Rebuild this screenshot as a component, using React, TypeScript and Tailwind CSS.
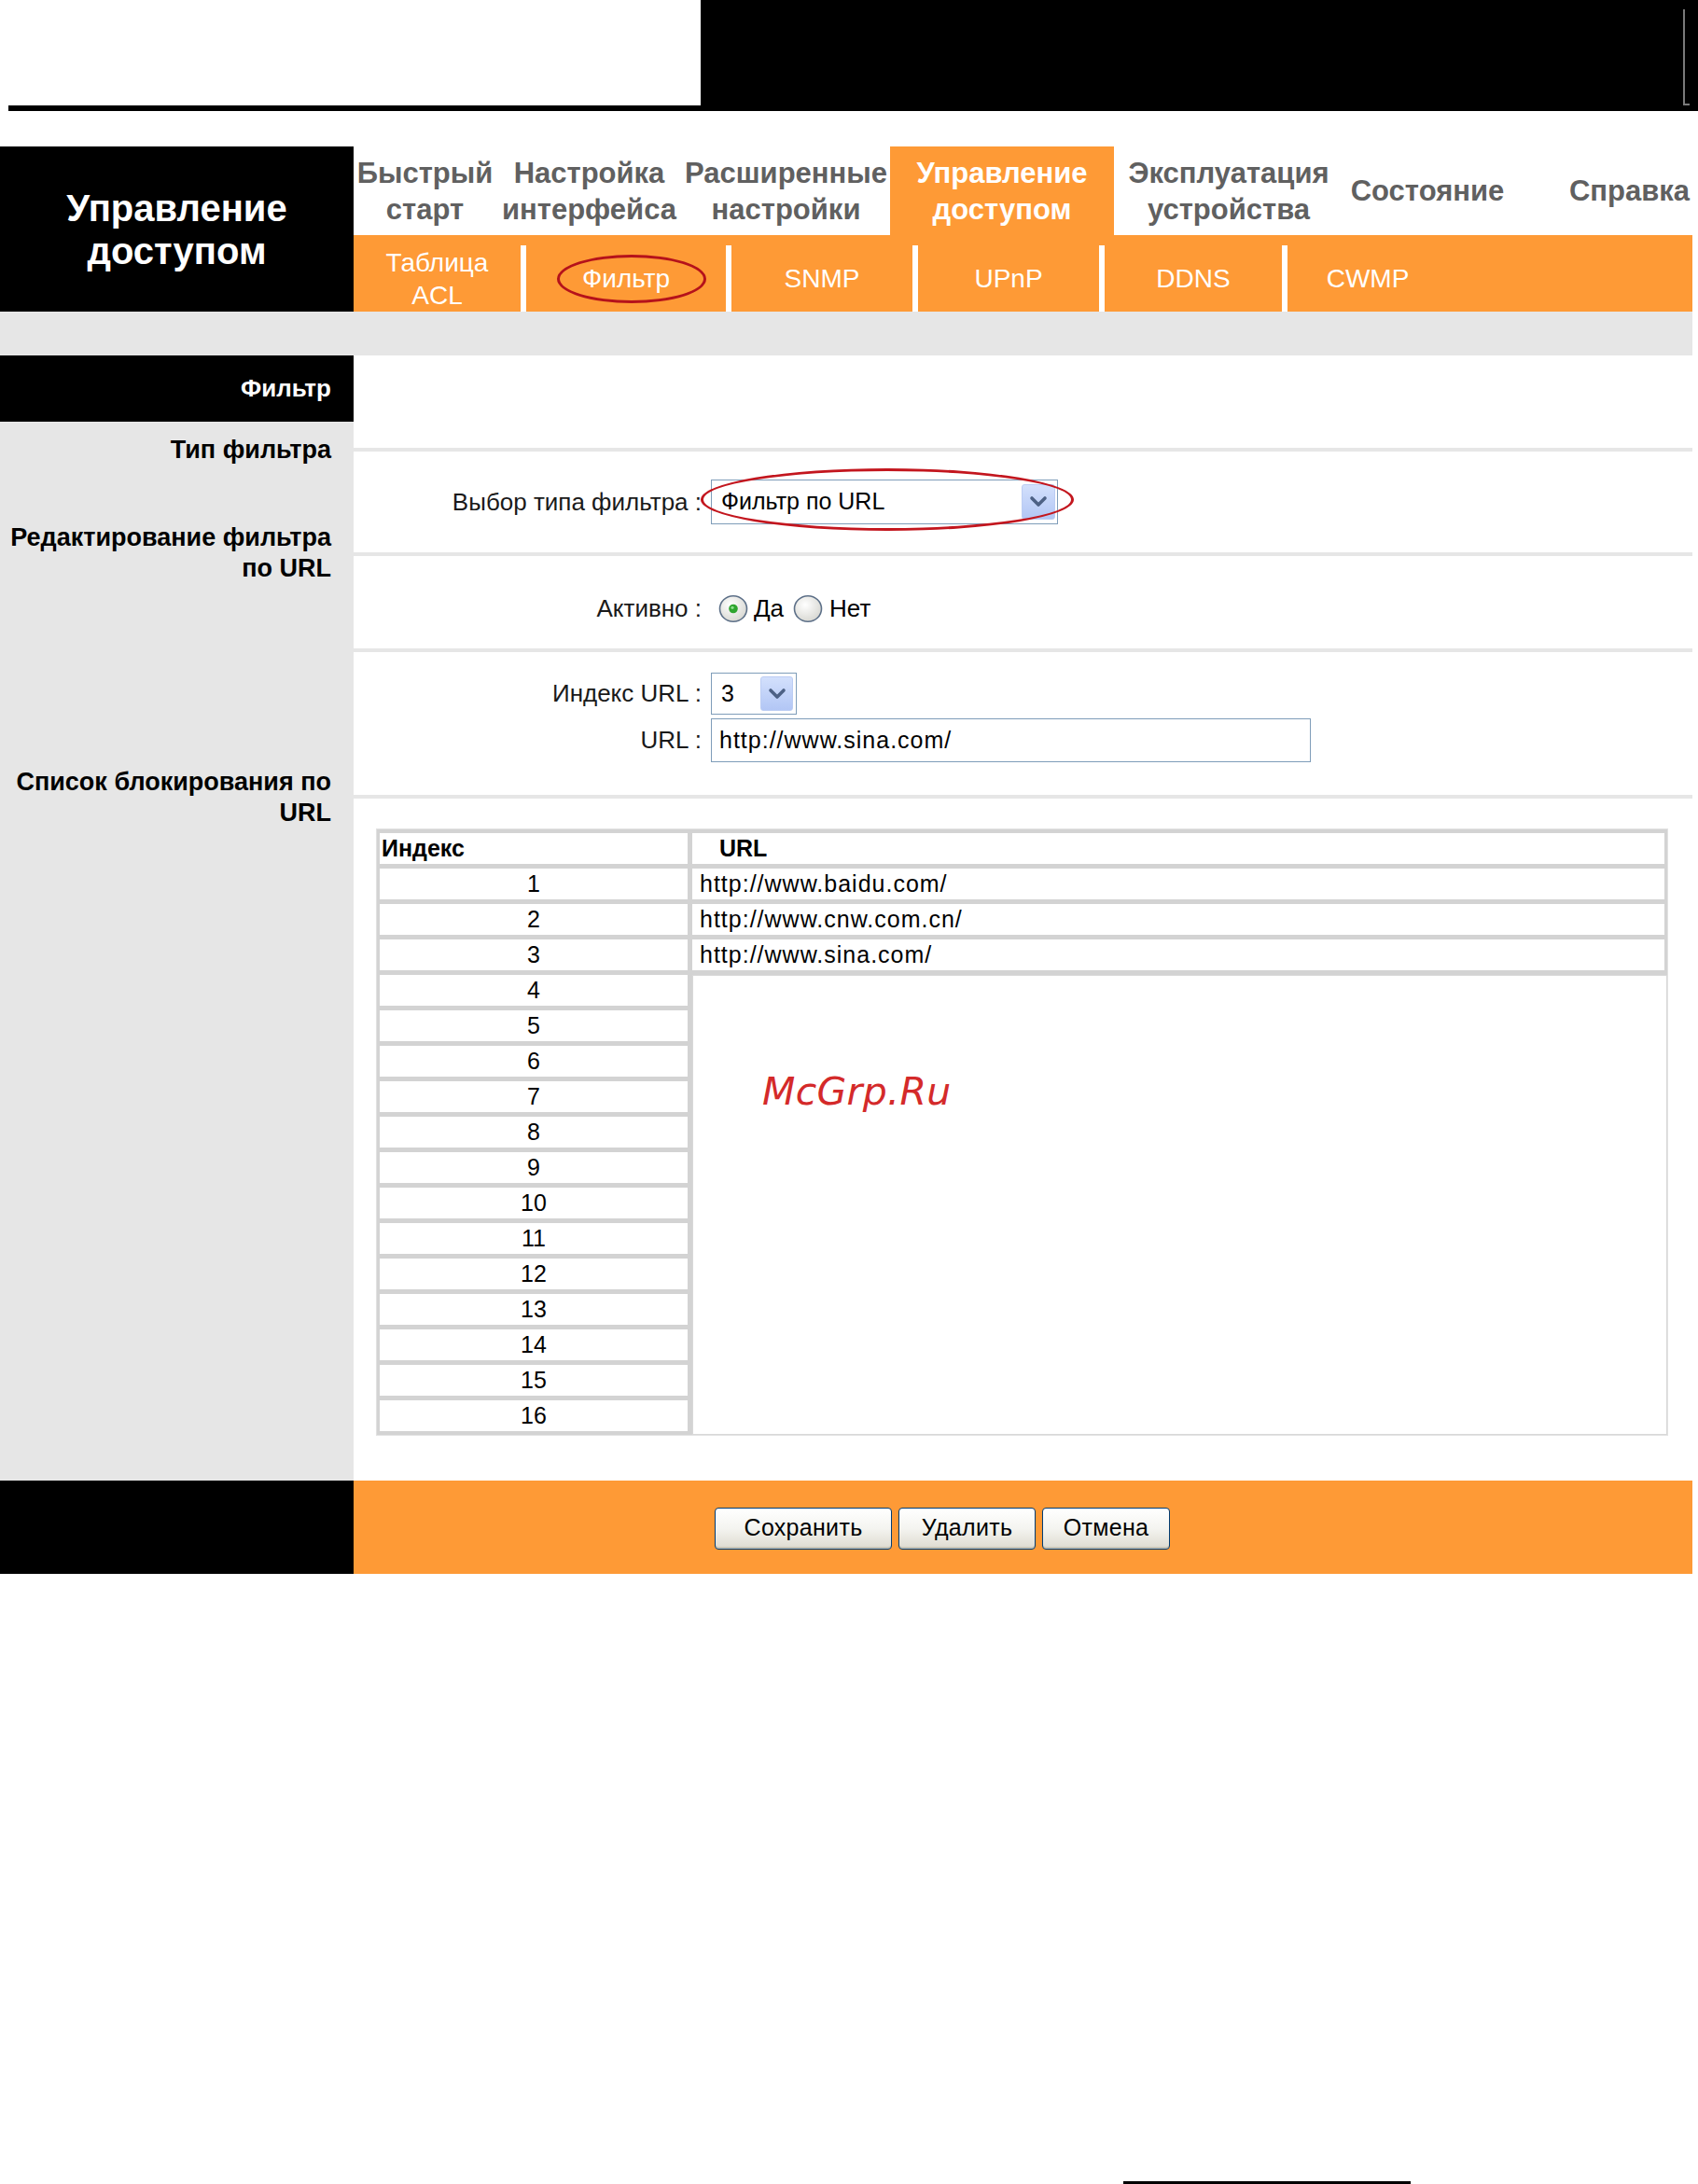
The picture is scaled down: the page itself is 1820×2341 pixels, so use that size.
import React from "react";

const navItems: { w: string; lines: string[]; active?: boolean; end?: boolean }[] = [
  { w: "w-[153px]", lines: ["Быстрый", "старт"] },
  { w: "w-[199px]", lines: ["Настройка", "интерфейса"] },
  { w: "w-[223px]", lines: ["Расширенные", "настройки"] },
  { w: "w-[240px]", lines: ["Управление", "доступом"], active: true },
  { w: "w-[246px]", lines: ["Эксплуатация", "устройства"] },
  { w: "w-[180px]", lines: ["Состояние"] },
  { w: "w-[194px]", lines: ["Справка"], end: true },
];

const subItems: { w: string; lines: string[]; circled?: boolean }[] = [
  { w: "w-[179px]", lines: ["Таблица", "ACL"] },
  { w: "w-[214px]", lines: ["Фильтр"], circled: true },
  { w: "w-[194px]", lines: ["SNMP"] },
  { w: "w-[194px]", lines: ["UPnP"] },
  { w: "w-[190px]", lines: ["DDNS"] },
  { w: "w-[172px]", lines: ["CWMP"] },
];

const urls = ["http://www.baidu.com/", "http://www.cnw.com.cn/", "http://www.sina.com/"];

function Chevron() {
  return (
    <svg width="20" height="14" viewBox="0 0 20 14">
      <path d="M3 3 L10 10 L17 3" fill="none" stroke="#4d6185" strokeWidth="3.6" strokeLinecap="round" strokeLinejoin="round" />
    </svg>
  );
}

function ArrowBox({ cls }: { cls: string }) {
  return (
    <div className={`absolute flex items-center justify-center rounded-[3px] border border-[#bccdf3] bg-gradient-to-b from-[#d3e0fc] to-[#b2c6f5] ${cls}`}>
      <Chevron />
    </div>
  );
}

function Radio({ checked }: { checked?: boolean }) {
  return (
    <svg width="32" height="31" viewBox="0 0 32 31">
      <defs>
        <radialGradient id={checked ? "rg1" : "rg2"} cx="0.4" cy="0.35" r="0.7">
          <stop offset="0" stopColor="#ffffff" />
          <stop offset="1" stopColor="#d6d6d0" />
        </radialGradient>
      </defs>
      <ellipse cx="16" cy="15.5" rx="14.5" ry="13.8" fill={`url(#${checked ? "rg1" : "rg2"})`} stroke="#5d7088" strokeWidth="1.6" />
      {checked && <circle cx="16" cy="15.5" r="4.8" fill="#2fa52f" />}
      {checked && <circle cx="15" cy="14.3" r="1.6" fill="#8fe08f" />}
    </svg>
  );
}

function XpButton({ w, label }: { w: string; label: string }) {
  return (
    <div className={`${w} flex h-[45px] items-center justify-center rounded-[4px] border border-[#003c74] bg-gradient-to-b from-[#ffffff] via-[#f4f4f0] to-[#dedbd0] text-[25px] tracking-[0.3px] text-black shadow-[inset_0_-2px_0_#c8c4b6]`}>
      {label}
    </div>
  );
}

export default function App() {
  return (
    <div className="relative h-[2341px] w-[1820px] overflow-hidden bg-white font-['Liberation_Sans',Arial,sans-serif]">
      {/* Top strip */}
      <div className="flex h-[119px]">
        <div className="flex w-[751px] flex-col justify-end">
          <div className="ml-[9px] h-[6px] bg-black" />
        </div>
        <div className="relative flex-1 bg-black">
          <div className="absolute left-[1053px] top-[10px] h-[102px] w-[2px] bg-[#7a7a7a]" />
          <div className="absolute left-[1053px] top-[111px] h-[2px] w-[7px] bg-[#7a7a7a]" />
        </div>
      </div>
      <div className="h-[38px]" />

      {/* Header */}
      <div className="flex h-[177px] w-[1814px]">
        <div className="flex w-[379px] flex-col items-center justify-center bg-black text-[40px] font-bold leading-[46px] text-white">
          <span>Управление</span>
          <span>доступом</span>
        </div>
        <div className="flex flex-1 flex-col">
          <div className="flex h-[95px] bg-white">
            {navItems.map((n) => (
              <div
                key={n.lines[0]}
                className={`${n.w} flex flex-col justify-center text-[31px] font-bold leading-[39px] ${
                  n.end ? "items-end pr-[3px]" : "items-center"
                } ${n.active ? "bg-[#fe9a36] text-white" : "text-[#606060]"}`}
              >
                {n.lines.map((l) => (
                  <span key={l} className="whitespace-nowrap">{l}</span>
                ))}
              </div>
            ))}
          </div>
          <div className="flex h-[82px] bg-[#fe9a36] pt-[11px]">
            {subItems.map((s, i) => (
              <React.Fragment key={s.lines[0]}>
                {i > 0 && <div className="h-full w-[6px] bg-white" />}
                <div className={`${s.w} relative flex flex-col items-center justify-center text-[28px] leading-[35px] text-white`}>
                  {s.lines.map((l) => (
                    <span key={l}>{l}</span>
                  ))}
                  {s.circled && (
                    <div className="absolute left-[33px] top-[10px] h-[52px] w-[160px] rounded-[50%] border-[3px] border-[#b5121b]" />
                  )}
                </div>
              </React.Fragment>
            ))}
          </div>
        </div>
      </div>

      {/* Gray band */}
      <div className="h-[47px] w-[1814px] bg-[#e6e6e6]" />

      {/* Main */}
      <div className="flex h-[1206px] w-[1814px]">
        {/* Left column */}
        <div className="flex w-[379px] flex-col bg-[#e6e6e6] text-right text-[27px] font-bold leading-[33px] text-black">
          <div className="flex h-[71px] items-center justify-end bg-black pr-[24px] text-[26px] text-white">Фильтр</div>
          <div className="mt-[14px] pr-[24px]">Тип фильтра</div>
          <div className="mt-[61px] pr-[24px]">
            Редактирование фильтра
            <br />
            по URL
          </div>
          <div className="mt-[196px] pr-[24px]">
            Список блокирования по
            <br />
            URL
          </div>
        </div>

        {/* Right column */}
        <div className="flex flex-1 flex-col bg-white text-[26px] text-[#1a1a1a]">
          <div className="h-[99px]" />
          <div className="h-[4px] bg-[#e6e6e6]" />
          {/* Row 1 */}
          <div className="relative flex h-[108px] items-center">
            <div className="w-[373px] text-right">Выбор типа фильтра :</div>
            <div className="relative ml-[10px] flex h-[48px] w-[372px] items-center border border-[#7f9db9] bg-white pl-[10px] text-[25px] text-black">
              Фильтр по URL
              <ArrowBox cls="right-[2px] top-[4px] h-[38px] w-[36px]" />
            </div>
            <div className="absolute left-[372px] top-[18px] h-[67px] w-[400px] rounded-[50%] border-[3.5px] border-[#c3161e]" />
          </div>
          <div className="h-[4px] bg-[#e6e6e6]" />
          {/* Row 2 */}
          <div className="flex h-[99px] items-center pt-[13px]">
            <div className="w-[373px] text-right">Активно :</div>
            <div className="ml-[18px] flex items-center text-black">
              <Radio checked />
              <span className="ml-[6px]">Да</span>
              <span className="ml-[10px] flex"><Radio /></span>
              <span className="ml-[7px]">Нет</span>
            </div>
          </div>
          <div className="h-[4px] bg-[#e6e6e6]" />
          {/* Row 3 */}
          <div className="flex h-[153px] flex-col gap-[4px] pt-[22px]">
            <div className="flex h-[45px] items-center">
              <div className="w-[373px] text-right">Индекс URL :</div>
              <div className="relative ml-[10px] flex h-[45px] w-[92px] items-center border border-[#7f9db9] bg-white pl-[10px] text-[25px] text-black">
                3
                <ArrowBox cls="right-[3px] top-[3px] h-[37px] w-[35px]" />
              </div>
            </div>
            <div className="flex h-[47px] items-center">
              <div className="w-[373px] text-right">URL :</div>
              <div className="ml-[10px] flex h-[47px] w-[643px] items-center border border-[#7f9db9] bg-white pl-[8px] text-[25px] tracking-[1px] text-black">
                http://www.sina.com/
              </div>
            </div>
          </div>
          <div className="h-[4px] bg-[#e6e6e6]" />
          <div className="h-[32px]" />

          {/* Table */}
          <div className="ml-[24px] flex w-[1385px] gap-[5px] border border-[#e2e2e2] bg-[#d3d3d3] px-[3px] py-[4px] text-[25px] text-black">
            <div className="flex w-[330px] flex-col gap-[5px]">
              <div className="flex h-[33px] items-center bg-white pl-[2px] font-bold">Индекс</div>
              {Array.from({ length: 16 }, (_, i) => (
                <div key={i} className="flex h-[33px] items-center justify-center bg-white">
                  {i + 1}
                </div>
              ))}
            </div>
            <div className="flex flex-1 flex-col gap-[5px]">
              <div className="flex h-[33px] items-center bg-white pl-[29px] font-bold">URL</div>
              {urls.map((u) => (
                <div key={u} className="flex h-[33px] items-center bg-white pl-[8px] tracking-[1px]">
                  {u}
                </div>
              ))}
              <div className="-mb-[4px] -mr-[3px] flex-1 border border-[#d8d8d8] bg-white" />
            </div>
          </div>
        </div>
      </div>

      {/* Footer */}
      <div className="flex h-[100px] w-[1814px]">
        <div className="w-[379px] bg-black" />
        <div className="flex flex-1 items-center gap-[7px] bg-[#fe9a36] pl-[387px] pt-[2px]">
          <XpButton w="w-[190px]" label="Сохранить" />
          <XpButton w="w-[147px]" label="Удалить" />
          <XpButton w="w-[137px]" label="Отмена" />
        </div>
      </div>

      {/* Bottom line */}
      <div className="ml-[1204px] mt-[651px] h-[3px] w-[308px] bg-black" />

      {/* Watermark */}
      <div className="absolute left-[817px] top-[1150px] font-['DejaVu_Sans',sans-serif] text-[41px] italic leading-none tracking-[0.3px] text-[#d42a2a]">
        McGrp.Ru
      </div>
    </div>
  );
}
